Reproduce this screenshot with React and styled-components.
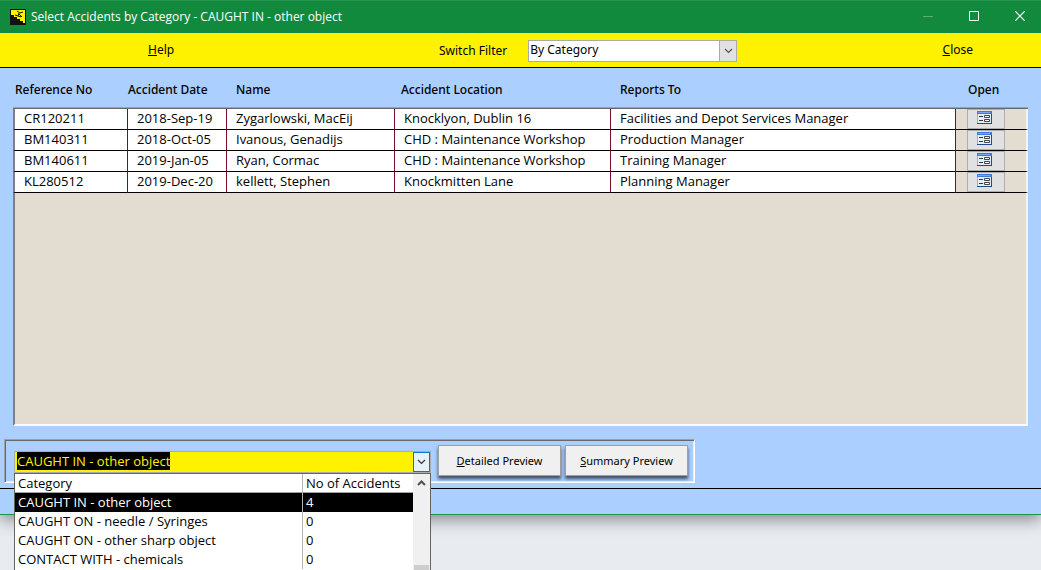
import { useEffect, useRef } from 'react';
import styled, { createGlobalStyle } from 'styled-components';

const GlobalStyle = createGlobalStyle`
  *, *::before, *::after {
    box-sizing: border-box;
  }

  body {
    margin: 0;
    background: #e8ebf0;
    color: #000;
  }

  button, input, select {
    font: inherit;
    color: inherit;
  }
`;

const uiFont = '"Noto Sans", "Open Sans", sans-serif';
const dataFont = '"Open Sans", "Noto Sans", sans-serif';

const Desktop = styled.div`
  display: flex;
  flex-direction: column;
  height: 100vh;
  padding-bottom: 55px;
  overflow: hidden;
  font-family: ${uiFont};
  font-size: 12px;
  line-height: 16px;
`;

const Window = styled.div`
  flex: 1;
  display: flex;
  flex-direction: column;
  background: #abcffe;
  border-top: 1px solid #27944f;
  border-bottom: 1px solid #1f944b;
  box-shadow: 0 4px 16px rgba(0, 0, 0, 0.45);
`;

const TitleBar = styled.header`
  display: flex;
  align-items: center;
  height: 32px;
  padding-left: 10px;
  background: #118a3e;
  color: #fff;
`;

const Title = styled.h1`
  flex: 1;
  margin: 0 0 0 5px;
  font-family: ${dataFont};
  font-size: 12px;
  font-weight: 400;
`;

const CaptionButtons = styled.div`
  display: flex;
  margin-right: -2px;
`;

const CaptionButton = styled.button`
  display: flex;
  align-items: center;
  justify-content: center;
  width: 46px;
  height: 32px;
  padding: 0 0 2px;
  border: 0;
  background: none;
  opacity: ${(props) => (props.disabled ? 0.3 : 1)};
`;

const Toolbar = styled.nav`
  display: grid;
  grid-template-columns: 439px auto 1fr;
  align-items: center;
  height: 35px;
  padding-right: 68px;
  background: #fff200;
  border-bottom: 1px solid #000;
`;

const MenuButton = styled.button`
  justify-self: ${(props) => props.$side};
  margin-left: ${(props) => (props.$side === 'start' ? '148px' : '0')};
  padding: 0;
  border: 0;
  background: none;
`;

const Filter = styled.div`
  display: flex;
  align-items: center;
  gap: 21px;
  padding-top: 2px;
`;

const SelectBox = styled.div`
  display: flex;
  position: relative;
  width: 209px;
  height: 22px;
`;

const Select = styled.select`
  appearance: none;
  width: 100%;
  padding: 0 20px 2px 1px;
  border: 1px solid #ababab;
  border-radius: 0;
  background: #fff;
`;

const SelectArrow = styled.span`
  position: absolute;
  top: 0;
  right: 0;
  display: flex;
  align-items: center;
  justify-content: center;
  width: 18px;
  height: 22px;
  border: 1px solid #ababab;
  background: #e1e1e1;
  pointer-events: none;
`;

const Content = styled.main`
  flex: 1;
  display: flex;
  flex-direction: column;
  padding: 0 13px;
`;

const Table = styled.table`
  width: 100%;
  table-layout: fixed;
  border-collapse: separate;
  border-spacing: 0;
`;

const Col = styled.col`
  width: ${(props) => props.$width};
`;

const HeadCell = styled.th`
  height: 41px;
  padding: 4px 0 0 ${(props) => props.$indent};
  border-bottom: 1px solid #696969;
  box-shadow: inset 0 -1px #a0a0a0;
  font-weight: 500;
  text-align: left;
  white-space: nowrap;
`;

const Cell = styled.td`
  height: 21px;
  padding: 0 0 2px 9px;
  border-right: 1px solid #7d0a26;
  border-bottom: 1px solid #000;
  background: #fff;
  font-family: ${dataFont};
  font-size: 13px;
  line-height: 18px;
  white-space: nowrap;

  &:first-child {
    border-left: 2px solid #808080;
  }
`;

const OpenCell = styled.td`
  padding: 0 0 0 11px;
  border-right: 2px solid #f4f4f4;
  border-bottom: 1px solid #000;
  background: #e3dcd1;
`;

const OpenButton = styled.button`
  display: flex;
  align-items: center;
  justify-content: center;
  width: 38px;
  height: 20px;
  padding: 0 3px 3px 0;
  border: 1px solid #adadad;
  background: #e1e1e1;
`;

const EmptyArea = styled.div`
  flex: 1;
  background: #e3dcd1;
  border-left: 2px solid #808080;
  border-right: 2px solid #f4f4f4;
  border-bottom: 2px solid #fafafa;
`;

const PreviewBar = styled.form`
  display: flex;
  align-items: flex-start;
  gap: 4px;
  align-self: flex-start;
  height: 44px;
  margin: 13px 0 5px 4px;
  padding: 5px 6px 0 9px;
  border: 1px solid;
  border-color: #a0a0a0 #fff #fff #a0a0a0;
  box-shadow: inset 1px 1px #696969, inset -1px -1px #e8eef6;
`;

const Combo = styled.div`
  position: relative;
  display: flex;
  width: 417px;
  height: 22px;
  margin: 6px 3px 0 0;
  border: 1px solid #ababab;
`;

const ComboInput = styled.input`
  flex: 1;
  min-width: 0;
  padding: 0 0 2px 2px;
  border: 0;
  outline: 0;
  background: #fff200;
  font-family: ${dataFont};
  font-size: 13px;
  line-height: 18px;

  &::selection {
    background: #000;
    color: #fff200;
  }
`;

const ComboButton = styled.button`
  display: flex;
  align-items: center;
  justify-content: center;
  width: 17px;
  padding: 0;
  border: 1px solid #0078d7;
  background: #e5f1fb;
`;

const DropList = styled.div`
  position: absolute;
  top: 21px;
  left: -1px;
  z-index: 1;
  display: flex;
  width: 417px;
  height: 160px;
  border: 1px solid #646464;
  background: #fff;
`;

const CategoryTable = styled.table`
  flex: 1;
  align-self: flex-start;
  table-layout: fixed;
  border-collapse: separate;
  border-spacing: 0;
  font-family: ${dataFont};
  font-size: 13px;
  line-height: 17px;
  text-align: left;
`;

const CategoryHead = styled.th`
  width: ${(props) => props.$width};
  height: 19px;
  padding: 0 0 0 3px;
  border-bottom: 1px solid #a0a0a0;
  font-weight: 400;
  white-space: nowrap;

  & + & {
    border-left: 1px solid #b4b4b4;
  }
`;

const CategoryRow = styled.tr`
  background: ${(props) => (props.$selected ? '#000' : '#fff')};
  color: ${(props) => (props.$selected ? '#fff' : '#000')};
`;

const CategoryCell = styled.td`
  height: 19px;
  padding: 1px 0 1px 3px;
  white-space: nowrap;

  & + & {
    border-left: 1px solid #b4b4b4;
  }
`;

const ScrollTrack = styled.div`
  display: flex;
  flex-direction: column;
  align-items: center;
  width: 17px;
  padding-top: 6px;
  background: #f0f0f0;
`;

const ScrollThumb = styled.div`
  width: 15px;
  height: 40px;
  margin-top: 79px;
  background: #cdcdcd;
`;

const PreviewButton = styled.button`
  width: 123px;
  height: 31px;
  padding: 0;
  border: 1px solid #a0a0a0;
  background: #f0f0f0;
  box-shadow: 0 3px 3px rgba(30, 40, 60, 0.75);
  font-size: 11px;
`;

const StatusBar = styled.footer`
  height: 26px;
  border-top: 1px solid #000;
`;

const accidents = [
  ['CR120211', '2018-Sep-19', 'Zygarlowski, MacEij', 'Knocklyon, Dublin 16', 'Facilities and Depot Services Manager'],
  ['BM140311', '2018-Oct-05', 'Ivanous, Genadijs', 'CHD : Maintenance Workshop', 'Production Manager'],
  ['BM140611', '2019-Jan-05', 'Ryan, Cormac', 'CHD : Maintenance Workshop', 'Training Manager'],
  ['KL280512', '2019-Dec-20', 'kellett, Stephen', 'Knockmitten Lane', 'Planning Manager'],
];

const columns = [
  { label: 'Reference No', width: '115px', indent: '2px' },
  { label: 'Accident Date', width: '99px', indent: '0' },
  { label: 'Name', width: '168px', indent: '9px' },
  { label: 'Accident Location', width: '216px', indent: '6px' },
  { label: 'Reports To', width: 'auto', indent: '9px' },
  { label: 'Open', width: '72px', indent: '12px' },
];

const categories = [
  ['CAUGHT IN - other object', 4],
  ['CAUGHT ON - needle / Syringes', 0],
  ['CAUGHT ON - other sharp object', 0],
  ['CONTACT WITH - chemicals', 0],
];

const AppIcon = () => (
  <svg width="16" height="16" viewBox="0 0 16 16" aria-hidden="true">
    <rect width="16" height="16" fill="#111" />
    <path d="M1 1h14v13h-2v-2h-3v-2H7V8H4V6H1z" fill="#fff200" />
    <path d="M7 2l3 2 3-1M9 4l-1 3-3-1M9 5l3 3M8 7l3 1" stroke="#111" fill="none" />
  </svg>
);

const Chevron = ({ up, color = '#333' }) => (
  <svg width="9" height="6" viewBox="0 0 9 6" aria-hidden="true">
    <path d={up ? 'M1 5l3.5-3.5L8 5' : 'M1 1l3.5 3.5L8 1'} fill="none" stroke={color} strokeWidth={up ? 2 : 1.2} />
  </svg>
);

const FormIcon = () => (
  <svg width="15" height="13" viewBox="0 0 15 13" aria-hidden="true">
    <rect width="15" height="13" fill="#8fb0ea" />
    <path d="M14 0h1v13H0v-1h14z" fill="#23488f" />
    <rect x="1" y="3" width="13" height="9" fill="#e6eefb" />
    <rect width="15" height="3" fill="#4277dd" />
    <rect x="1" y="1" width="12" height="1" fill="#7ba6f5" />
    <path d="M2 5.5h4M2 9.5h4" stroke="#333" />
    <path d="M7.5 4.5h5v2h-5zM7.5 8.5h5v2h-5z" fill="#fff" stroke="#444" />
  </svg>
);

const App = () => {
  const comboRef = useRef(null);

  useEffect(() => {
    comboRef.current.focus();
    comboRef.current.select();
  }, []);

  return (
    <Desktop>
      <GlobalStyle />
      <Window>
        <TitleBar>
          <AppIcon />
          <Title>Select Accidents by Category - CAUGHT IN - other object</Title>
          <CaptionButtons>
            <CaptionButton aria-label="Minimize" disabled>
              <svg width="10" height="10"><path d="M0 5.5h10" stroke="#fff" /></svg>
            </CaptionButton>
            <CaptionButton aria-label="Maximize">
              <svg width="10" height="10"><path d="M.5.5h9v9h-9z" stroke="#fff" fill="none" /></svg>
            </CaptionButton>
            <CaptionButton aria-label="Close window">
              <svg width="10" height="10"><path d="M0 0l10 10M10 0L0 10" stroke="#fff" strokeWidth="1.2" /></svg>
            </CaptionButton>
          </CaptionButtons>
        </TitleBar>
        <Toolbar>
          <MenuButton $side="start"><u>H</u>elp</MenuButton>
          <Filter>
            <label htmlFor="filter">Switch Filter</label>
            <SelectBox>
              <Select id="filter" defaultValue="category">
                <option value="category">By Category</option>
              </Select>
              <SelectArrow><Chevron color="#555" /></SelectArrow>
            </SelectBox>
          </Filter>
          <MenuButton $side="end"><u>C</u>lose</MenuButton>
        </Toolbar>
        <Content>
          <Table>
            <colgroup>
              {columns.map((column) => (
                <Col key={column.label} $width={column.width} />
              ))}
            </colgroup>
            <thead>
              <tr>
                {columns.map((column) => (
                  <HeadCell key={column.label} $indent={column.indent}>{column.label}</HeadCell>
                ))}
              </tr>
            </thead>
            <tbody>
              {accidents.map((accident) => (
                <tr key={accident[0]}>
                  {accident.map((value, index) => (
                    <Cell key={index}>{value}</Cell>
                  ))}
                  <OpenCell>
                    <OpenButton aria-label={`Open ${accident[0]}`}><FormIcon /></OpenButton>
                  </OpenCell>
                </tr>
              ))}
            </tbody>
          </Table>
          <EmptyArea />
        </Content>
        <PreviewBar onSubmit={(event) => event.preventDefault()}>
          <Combo>
            <ComboInput ref={comboRef} aria-label="Category" defaultValue="CAUGHT IN - other object" />
            <ComboButton type="button" aria-label="Show categories"><Chevron /></ComboButton>
            <DropList>
              <CategoryTable>
                <thead>
                  <tr>
                    <CategoryHead $width="287px">Category</CategoryHead>
                    <CategoryHead>No of Accidents</CategoryHead>
                  </tr>
                </thead>
                <tbody>
                  {categories.map(([name, count], index) => (
                    <CategoryRow key={name} $selected={index === 0}>
                      <CategoryCell>{name}</CategoryCell>
                      <CategoryCell>{count}</CategoryCell>
                    </CategoryRow>
                  ))}
                </tbody>
              </CategoryTable>
              <ScrollTrack>
                <Chevron up color="#505050" />
                <ScrollThumb />
              </ScrollTrack>
            </DropList>
          </Combo>
          <PreviewButton type="button"><u>D</u>etailed Preview</PreviewButton>
          <PreviewButton type="button"><u>S</u>ummary Preview</PreviewButton>
        </PreviewBar>
        <StatusBar />
      </Window>
    </Desktop>
  );
};

export default App;
